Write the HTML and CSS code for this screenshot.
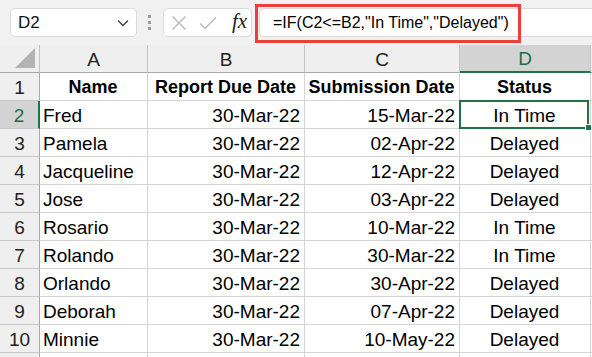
FILE: index.html
```html
<!DOCTYPE html>
<html>
<head>
<meta charset="utf-8">
<link rel="stylesheet" href="styles.css">
</head>
<body>
<div class="app">
  <div class="toolbar">
    <div class="namebox">
      <span class="ref">D2</span>
      <svg class="chev" width="12" height="8" viewBox="0 0 12 8"><path d="M1 1.5 L6 6.5 L11 1.5" fill="none" stroke="#404040" stroke-width="1.4"/></svg>
    </div>
    <div class="dots"><span></span><span></span><span></span></div>
    <div class="iconbox">
      <svg width="16" height="16" viewBox="0 0 16 16"><path d="M1.5 1.5 L14.5 14.5 M14.5 1.5 L1.5 14.5" stroke="#b8b8b8" stroke-width="1.4" fill="none"/></svg>
      <svg width="18" height="14" viewBox="0 0 18 14"><path d="M1 7.5 L6 12.5 L17 1.5" stroke="#b8b8b8" stroke-width="1.4" fill="none"/></svg>
      <span class="fx">fx</span>
    </div>
    <div class="formula">
      <span class="ftext">=IF(C2&lt;=B2,"In Time","Delayed")</span>
      <div class="highlight"></div>
    </div>
  </div>
  <div class="sheet">
    <div class="corner"><svg width="22" height="22" viewBox="0 0 22 22"><polygon points="21,1 21,21 1,21" fill="#b3b3b3"/></svg></div>
    <div class="colhead">A</div>
    <div class="colhead">B</div>
    <div class="colhead">C</div>
    <div class="colhead sel">D</div>
    <div class="colhead blank"></div>

    <div class="rowhead">1</div>
    <div class="cell bold left">Name</div>
    <div class="cell bold">Report Due Date</div>
    <div class="cell bold">Submission Date</div>
    <div class="cell bold">Status</div>
    <div class="cell"></div>

    <div class="rowhead sel">2</div>
    <div class="cell left">Fred</div>
    <div class="cell right">30-Mar-22</div>
    <div class="cell right">15-Mar-22</div>
    <div class="cell active">In Time</div>
    <div class="cell"></div>

    <div class="rowhead">3</div>
    <div class="cell left">Pamela</div>
    <div class="cell right">30-Mar-22</div>
    <div class="cell right">02-Apr-22</div>
    <div class="cell">Delayed</div>
    <div class="cell"></div>

    <div class="rowhead">4</div>
    <div class="cell left">Jacqueline</div>
    <div class="cell right">30-Mar-22</div>
    <div class="cell right">12-Apr-22</div>
    <div class="cell">Delayed</div>
    <div class="cell"></div>

    <div class="rowhead">5</div>
    <div class="cell left">Jose</div>
    <div class="cell right">30-Mar-22</div>
    <div class="cell right">03-Apr-22</div>
    <div class="cell">Delayed</div>
    <div class="cell"></div>

    <div class="rowhead">6</div>
    <div class="cell left">Rosario</div>
    <div class="cell right">30-Mar-22</div>
    <div class="cell right">10-Mar-22</div>
    <div class="cell">In Time</div>
    <div class="cell"></div>

    <div class="rowhead">7</div>
    <div class="cell left">Rolando</div>
    <div class="cell right">30-Mar-22</div>
    <div class="cell right">30-Mar-22</div>
    <div class="cell">In Time</div>
    <div class="cell"></div>

    <div class="rowhead">8</div>
    <div class="cell left">Orlando</div>
    <div class="cell right">30-Mar-22</div>
    <div class="cell right">30-Apr-22</div>
    <div class="cell">Delayed</div>
    <div class="cell"></div>

    <div class="rowhead">9</div>
    <div class="cell left">Deborah</div>
    <div class="cell right">30-Mar-22</div>
    <div class="cell right">07-Apr-22</div>
    <div class="cell">Delayed</div>
    <div class="cell"></div>

    <div class="rowhead">10</div>
    <div class="cell left">Minnie</div>
    <div class="cell right">30-Mar-22</div>
    <div class="cell right">10-May-22</div>
    <div class="cell">Delayed</div>
    <div class="cell"></div>

    <div class="rowhead"></div>
    <div class="cell"></div>
    <div class="cell"></div>
    <div class="cell"></div>
    <div class="cell"></div>
    <div class="cell"></div>
  </div>
</div>
</body>
</html>
```
FILE: styles.css
```css
* { box-sizing: border-box; }
html, body { margin: 0; padding: 0; }
body {
  width: 592px;
  height: 357px;
  overflow: hidden;
  background: #ffffff;
  font-family: "Liberation Sans", Arial, sans-serif;
  color: #000;
}
.app { width: 592px; }
.toolbar {
  height: 45px;
  background: #f1f1f1;
  display: flex;
  align-items: center;
  padding-left: 10px;
}
.namebox {
  width: 127px;
  height: 29px;
  background: #fff;
  border: 1px solid #dadada;
  border-radius: 5px;
  display: flex;
  align-items: center;
  justify-content: space-between;
  padding: 0 7px 0 7px;
}
.ref { font-size: 17px; color: #111; }
.chev { margin-top: 1px; }
.dots {
  display: flex;
  flex-direction: column;
  gap: 3px;
  margin-left: 11px;
  margin-right: 12px;
}
.dots span { width: 3px; height: 3px; background: #9a9a9a; display: block; }
.iconbox {
  width: 89px;
  height: 29px;
  background: #fff;
  border: 1px solid #dadada;
  border-radius: 5px;
  display: flex;
  align-items: center;
  padding-left: 7px;
  gap: 12px;
}
.fx {
  font-family: "Liberation Serif", "Times New Roman", serif;
  font-style: italic;
  font-size: 21px;
  color: #222;
  margin-left: 3px;
  margin-top: -2px;
}
.formula {
  position: relative;
  flex: 1;
  height: 29px;
  margin-left: 7px;
  background: #fff;
  border: 1px solid #dadada;
  border-right: none;
  border-radius: 5px 0 0 5px;
  display: flex;
  align-items: center;
  padding-left: 13px;
}
.ftext { font-size: 16px; color: #000; white-space: nowrap; }
.highlight {
  position: absolute;
  left: -5px;
  top: -5px;
  width: 266px;
  height: 39px;
  border: 3px solid #ee3d3d;
}
.sheet {
  display: grid;
  grid-template-columns: 40px 108px 157px 155px 131px 1fr;
  grid-template-rows: 28px repeat(10, 28px) 10px;
}
.corner, .colhead, .rowhead {
  background: #efefef;
  border-right: 1px solid #c4c4c4;
  border-bottom: 1px solid #a9a9a9;
  color: #222;
  font-size: 19px;
  display: flex;
  align-items: center;
  justify-content: center;
}
.corner {
  align-items: flex-end;
  justify-content: flex-end;
  padding: 0 3px 3px 0;
}
.colhead { padding-top: 2px; }
.colhead.sel {
  background: #d3d3d3;
  color: #1e6e45;
  border-bottom: 2px solid #217346;
}
.colhead.blank { border-right: none; }
.rowhead {
  border-bottom: 1px solid #c8c8c8;
  border-right: 1px solid #a9a9a9;
  padding-top: 2px;
}
.rowhead.sel {
  background: #d3d3d3;
  color: #1e6e45;
  border-right: 2px solid #217346;
}
.cell {
  border-right: 1px solid #d4d4d4;
  border-bottom: 1px solid #d4d4d4;
  font-size: 19px;
  display: flex;
  align-items: center;
  justify-content: center;
  padding: 2px 4px 0 3px;
  white-space: nowrap;
}
.cell.left { justify-content: flex-start; }
.cell.right { justify-content: flex-end; }
.cell.bold { font-weight: bold; font-size: 18px; }
.cell.bold.left { justify-content: center; }
.cell.active {
  position: relative;
}
.cell.active::before {
  content: "";
  position: absolute;
  left: -1px;
  top: -1px;
  right: 1px;
  bottom: -1px;
  border: 2px solid #217346;
}
.cell.active::after {
  content: "";
  position: absolute;
  right: -2px;
  bottom: -3px;
  width: 5px;
  height: 5px;
  background: #217346;
  border: 1px solid #fff;
}
```
